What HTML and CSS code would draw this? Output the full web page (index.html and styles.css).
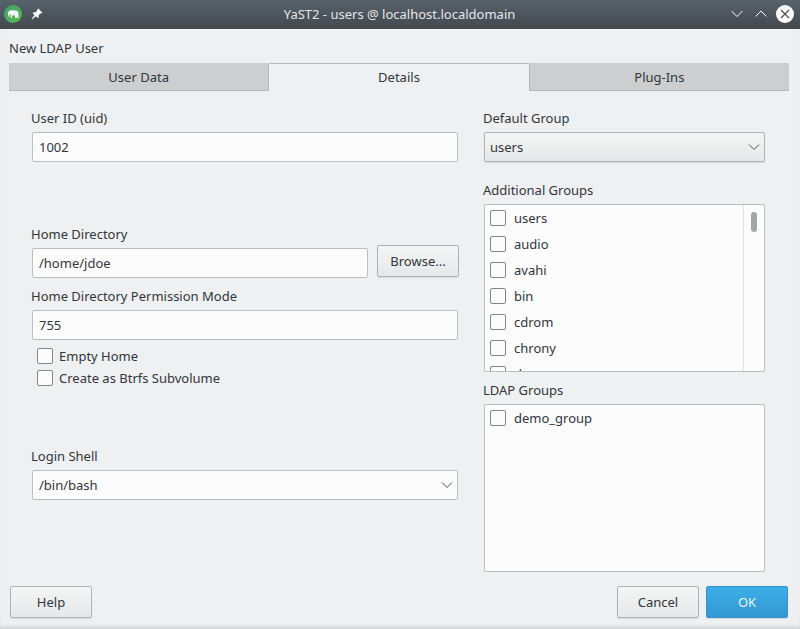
FILE: index.html
```html
<!DOCTYPE html>
<html lang="en">
  <head>
    <meta charset="UTF-8" />
    <title>YaST2 - users @ localhost.localdomain</title>
    <link rel="stylesheet" href="styles.css">
  </head>
  <body>
    <div class="window">
      <div class="titlebar">
        <svg class="app-icon" width="18" height="18" viewBox="0 0 18 18">
          <defs>
            <linearGradient id="appGreen" x1="0" y1="0" x2="1" y2="1">
              <stop offset="0" stop-color="#3f9f6b" />
              <stop offset="1" stop-color="#5dbb4f" />
            </linearGradient>
          </defs>
          <circle cx="9" cy="9" r="9" fill="url(#appGreen)" />
          <path d="M4 8.500C4 6 6 5 8 5.300l3.500.2c2 .1 3 1.200 3 3V13H13v-2.500L12.500 13H11v-2.500H8V13H6.500V9.500C6 9 5.500 9.200 5.300 10L5 11.500H4z" fill="#f4f6f4" />
        </svg>
        <svg class="pin-icon" width="12" height="12" viewBox="0 0 12 12">
          <path d="M7.200.6l4.200 4.200-1.100.8-.7-.3-2.100 2.200.2 1.700-.9.900-1.900-1.900L1 11.400l-.4-.4 2.900-3.900L1.600 5.200l.9-.9 1.700.2 2.200-2.100-.3-.7z" fill="#fcfcfc" />
        </svg>
        <div class="window-title">YaST2 - users @ localhost.localdomain</div>
        <svg class="win-btn" width="14" height="14" viewBox="0 0 14 14">
          <path d="M1.500 4l5.500 5.500L12.500 4" fill="none" stroke="#fcfcfc" stroke-width="1" />
        </svg>
        <svg class="win-btn" width="14" height="14" viewBox="0 0 14 14">
          <path d="M1.500 9.500L7 4l5.500 5.500" fill="none" stroke="#fcfcfc" stroke-width="1" />
        </svg>
        <svg class="close-btn" width="18" height="18" viewBox="0 0 18 18">
          <circle cx="9" cy="9" r="9" fill="#fcfcfc" />
          <path d="M5 5l8 8M13 5l-8 8" stroke="#4d4d4d" stroke-width="1.200" />
        </svg>
      </div>

      <div class="dialog">
        <div class="heading">New LDAP User</div>

        <div class="tabs">
          <div class="tab">User Data</div>
          <div class="tab active">Details</div>
          <div class="tab">Plug-Ins</div>
        </div>

        <div class="details">
          <div class="col-left">
            <label class="field-label">User ID (uid)</label>
            <div class="input">1002</div>

            <label class="field-label home-label">Home Directory</label>
            <div class="home-row">
              <div class="input grow">/home/jdoe</div>
              <div class="btn browse">Browse...</div>
            </div>

            <label class="field-label perm-label">Home Directory Permission Mode</label>
            <div class="input">755</div>

            <div class="check-stack">
              <div class="check-row"><span class="check"></span>Empty Home</div>
              <div class="check-row"><span class="check"></span>Create as Btrfs Subvolume</div>
            </div>

            <label class="field-label shell-label">Login Shell</label>
            <div class="input select-input">
              /bin/bash
              <svg class="chevron" width="12" height="8" viewBox="0 0 12 8">
                <path d="M1 1.500l5 5 5-5" fill="none" stroke="#4d5256" stroke-width="1" />
              </svg>
            </div>
          </div>

          <div class="col-right">
            <label class="field-label">Default Group</label>
            <div class="combo">
              users
              <svg class="chevron" width="12" height="8" viewBox="0 0 12 8">
                <path d="M1 1.500l5 5 5-5" fill="none" stroke="#4d5256" stroke-width="1" />
              </svg>
            </div>

            <label class="field-label groups-label">Additional Groups</label>
            <div class="listbox groups-list">
              <div class="list-items">
                <div class="list-row"><span class="check"></span>users</div>
                <div class="list-row"><span class="check"></span>audio</div>
                <div class="list-row"><span class="check"></span>avahi</div>
                <div class="list-row"><span class="check"></span>bin</div>
                <div class="list-row"><span class="check"></span>cdrom</div>
                <div class="list-row"><span class="check"></span>chrony</div>
                <div class="list-row"><span class="check"></span>daemon</div>
              </div>
              <div class="scroll-track"><div class="scroll-thumb"></div></div>
            </div>

            <label class="field-label ldap-label">LDAP Groups</label>
            <div class="listbox ldap-list">
              <div class="list-items">
                <div class="list-row"><span class="check"></span>demo_group</div>
              </div>
            </div>
          </div>
        </div>

        <div class="footer">
          <div class="btn">Help</div>
          <div class="footer-right">
            <div class="btn">Cancel</div>
            <div class="btn primary">OK</div>
          </div>
        </div>
      </div>
    </div>
  </body>
</html>
```

FILE: styles.css
```css
* {
  box-sizing: border-box;
}

html,
body {
  margin: 0;
  height: 100%;
}

body {
  font-family: "Noto Sans", sans-serif;
  font-size: 13px;
  color: #31363b;
  background: #eff0f1;
  overflow: hidden;
}

.window {
  height: 629px;
  display: flex;
  flex-direction: column;
  box-shadow: inset 0 -4px 4px -2px rgba(0, 0, 0, 0.14);
}

.titlebar {
  height: 29px;
  flex: none;
  display: flex;
  align-items: center;
  padding: 0 6px 1px 4px;
  background: linear-gradient(#58626b, #42484e);
  color: #fcfcfc;
}

.app-icon {
  flex: none;
}

.pin-icon {
  flex: none;
  margin-left: 9px;
}

.window-title {
  flex: 1;
  text-align: center;
  padding-left: 26px;
  color: #e4e6e8;
}

.win-btn {
  flex: none;
  margin-right: 10px;
}

.close-btn {
  flex: none;
  margin-left: -2px;
}

.dialog {
  flex: 1;
  display: flex;
  flex-direction: column;
  padding: 0 12px 11px 10px;
}

.heading {
  height: 34px;
  line-height: 38px;
  margin-left: -1px;
}

.tabs {
  display: flex;
  height: 28px;
  margin: 0 -1px;
}

.tab {
  flex: 1;
  text-align: center;
  line-height: 26px;
  background: #cdcecf;
  border-top: 1px solid #cdcecf;
  border-bottom: 1px solid #b5b6b7;
}

.tab.active {
  background: #eff0f1;
  border: 1px solid #b5b6b7;
  border-bottom: none;
  border-radius: 2px 2px 0 0;
}

.details {
  flex: 1;
  display: flex;
  padding: 17px 0 0 22px;
}

.col-left {
  width: 426px;
  display: flex;
  flex-direction: column;
}

.col-right {
  width: 281px;
  margin-left: 26px;
  display: flex;
  flex-direction: column;
}

.field-label {
  display: block;
  height: 24px;
  line-height: 20px;
  margin-left: -1px;
}

.input {
  height: 30px;
  line-height: 28px;
  padding: 0 6px;
  background: #fcfcfc;
  border: 1px solid #bcbebf;
  border-radius: 2px;
}

.grow {
  flex: 1;
}

.home-label {
  margin-top: 48px;
  height: 38px;
  padding-top: 14px;
}

.home-row {
  display: flex;
  height: 30px;
  gap: 9px;
}

.browse {
  width: 82px;
  height: 32px;
  margin-top: -3px;
  margin-right: -1px;
}

.perm-label {
  margin-top: 8px;
}

.check-stack {
  padding: 5px 0 0 5px;
}

.check-row {
  display: flex;
  align-items: center;
  height: 22px;
}

.check {
  flex: none;
  width: 16px;
  height: 16px;
  margin-right: 6px;
  background: #fcfcfc;
  border: 1px solid #85888b;
  border-radius: 2px;
}

.shell-label {
  margin-top: 57px;
}

.select-input {
  position: relative;
}

.chevron {
  position: absolute;
  right: 4px;
  top: 10px;
}

.combo {
  position: relative;
  height: 30px;
  line-height: 28px;
  padding: 0 5px;
  background: linear-gradient(#f4f5f5, #e6e7e8);
  border: 1px solid #b0b2b4;
  border-radius: 2px;
  box-shadow: 0 1px 1px rgba(0, 0, 0, 0.1);
}

.groups-label {
  margin-top: 18px;
}

.listbox {
  display: flex;
  height: 168px;
  background: #fcfcfc;
  border: 1px solid #bcbebf;
  border-radius: 2px;
  overflow: hidden;
}

.ldap-label {
  margin-top: 8px;
}

.list-items {
  flex: 1;
}

.list-row {
  display: flex;
  align-items: center;
  height: 26px;
  padding-left: 5px;
}

.list-row .check {
  margin-right: 8px;
}

.scroll-track {
  flex: none;
  width: 21px;
  border-left: 1px solid #e3e4e5;
  padding: 7px 0 0 7px;
}

.scroll-thumb {
  width: 6px;
  height: 20px;
  border-radius: 3px;
  background: #a3a5a7;
}

.footer {
  flex: none;
  display: flex;
  justify-content: space-between;
}

.footer-right {
  display: flex;
  gap: 7px;
}

.btn {
  width: 82px;
  height: 32px;
  line-height: 30px;
  text-align: center;
  background: linear-gradient(#f4f5f5, #e6e7e8);
  border: 1px solid #b0b2b4;
  border-radius: 2px;
  box-shadow: 0 1px 1px rgba(0, 0, 0, 0.1);
}

.btn.primary {
  background: linear-gradient(#3daee9, #3398d0);
  border-color: #3395cc;
  color: #e8f4fb;
}
```
